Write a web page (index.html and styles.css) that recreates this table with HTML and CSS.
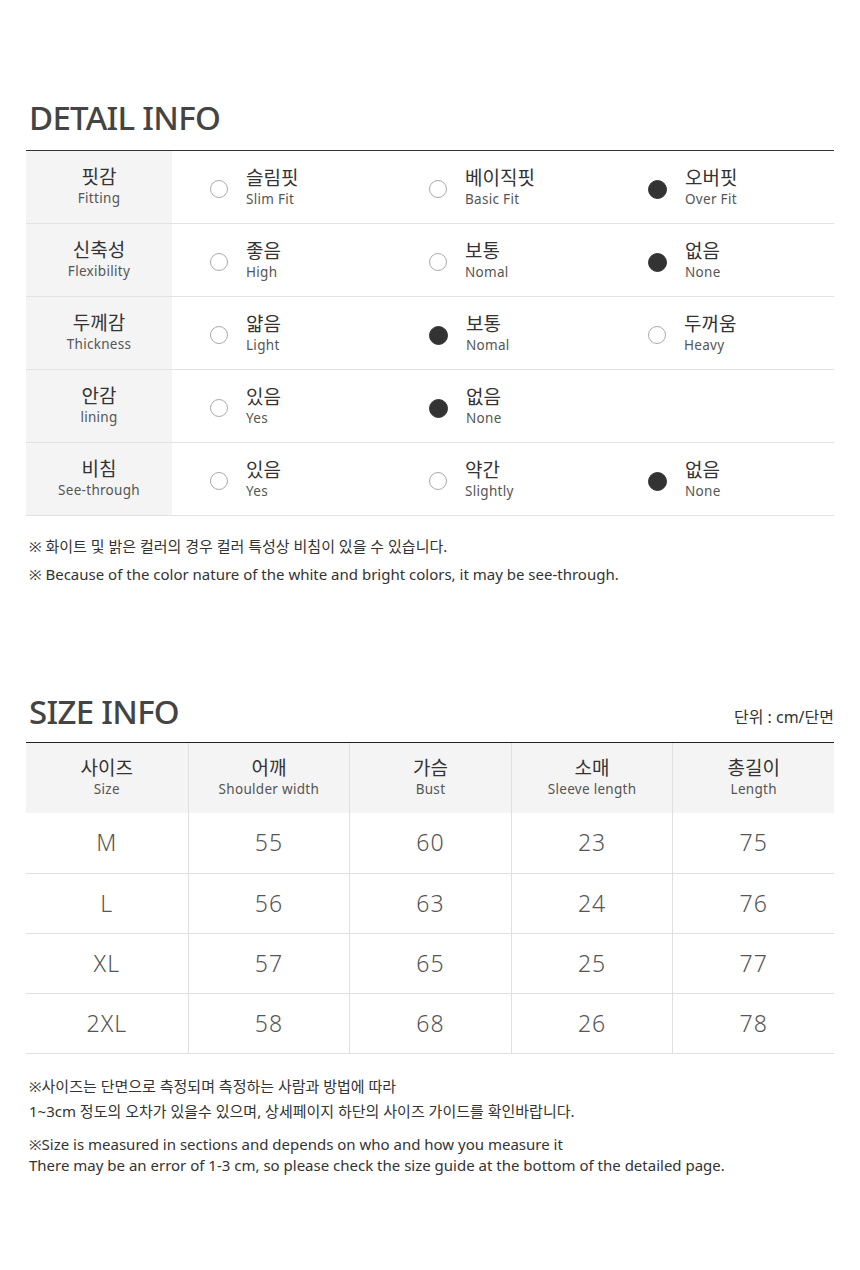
FILE: index.html
```html
<!DOCTYPE html>
<html lang="ko">
<head>
<meta charset="utf-8">
<link rel="stylesheet" href="styles.css">
</head>
<body>
<div class="page">
  <section class="detail">
    <h2 class="title">DETAIL INFO</h2>
    <div class="dtable">
      <div class="drow">
        <div class="dlabel"><span class="ko">핏감</span><span class="en">Fitting</span></div>
        <div class="opt"><span class="radio"></span><div class="txt"><span class="ko">슬림핏</span><span class="en">Slim Fit</span></div></div>
        <div class="opt"><span class="radio"></span><div class="txt"><span class="ko">베이직핏</span><span class="en">Basic Fit</span></div></div>
        <div class="opt"><span class="radio on"></span><div class="txt"><span class="ko">오버핏</span><span class="en">Over Fit</span></div></div>
      </div>
      <div class="drow">
        <div class="dlabel"><span class="ko">신축성</span><span class="en">Flexibility</span></div>
        <div class="opt"><span class="radio"></span><div class="txt"><span class="ko">좋음</span><span class="en">High</span></div></div>
        <div class="opt"><span class="radio"></span><div class="txt"><span class="ko">보통</span><span class="en">Nomal</span></div></div>
        <div class="opt"><span class="radio on"></span><div class="txt"><span class="ko">없음</span><span class="en">None</span></div></div>
      </div>
      <div class="drow">
        <div class="dlabel"><span class="ko">두께감</span><span class="en">Thickness</span></div>
        <div class="opt"><span class="radio"></span><div class="txt"><span class="ko">얇음</span><span class="en">Light</span></div></div>
        <div class="opt"><span class="radio on"></span><div class="txt"><span class="ko">보통</span><span class="en">Nomal</span></div></div>
        <div class="opt"><span class="radio"></span><div class="txt"><span class="ko">두꺼움</span><span class="en">Heavy</span></div></div>
      </div>
      <div class="drow">
        <div class="dlabel"><span class="ko">안감</span><span class="en">lining</span></div>
        <div class="opt"><span class="radio"></span><div class="txt"><span class="ko">있음</span><span class="en">Yes</span></div></div>
        <div class="opt"><span class="radio on"></span><div class="txt"><span class="ko">없음</span><span class="en">None</span></div></div>
        <div class="opt"></div>
      </div>
      <div class="drow">
        <div class="dlabel"><span class="ko">비침</span><span class="en">See-through</span></div>
        <div class="opt"><span class="radio"></span><div class="txt"><span class="ko">있음</span><span class="en">Yes</span></div></div>
        <div class="opt"><span class="radio"></span><div class="txt"><span class="ko">약간</span><span class="en">Slightly</span></div></div>
        <div class="opt"><span class="radio on"></span><div class="txt"><span class="ko">없음</span><span class="en">None</span></div></div>
      </div>
    </div>
    <div class="notes1">
      <p>※ 화이트 및 밝은 컬러의 경우 컬러 특성상 비침이 있을 수 있습니다.</p>
      <p>※ Because of the color nature of the white and bright colors, it may be see-through.</p>
    </div>
  </section>

  <section class="size">
    <div class="size-head">
      <h2 class="title">SIZE INFO</h2>
      <span class="unit">단위 : cm/단면</span>
    </div>
    <div class="stable">
      <div class="shead"><span class="ko">사이즈</span><span class="en">Size</span></div>
      <div class="shead"><span class="ko">어깨</span><span class="en">Shoulder width</span></div>
      <div class="shead"><span class="ko">가슴</span><span class="en">Bust</span></div>
      <div class="shead"><span class="ko">소매</span><span class="en">Sleeve length</span></div>
      <div class="shead"><span class="ko">총길이</span><span class="en">Length</span></div>

      <div class="scell">M</div><div class="scell">55</div><div class="scell">60</div><div class="scell">23</div><div class="scell">75</div>
      <div class="scell">L</div><div class="scell">56</div><div class="scell">63</div><div class="scell">24</div><div class="scell">76</div>
      <div class="scell">XL</div><div class="scell">57</div><div class="scell">65</div><div class="scell">25</div><div class="scell">77</div>
      <div class="scell">2XL</div><div class="scell">58</div><div class="scell">68</div><div class="scell">26</div><div class="scell">78</div>
    </div>
    <div class="notes2">
      <p class="ko-note">※사이즈는 단면으로 측정되며 측정하는 사람과 방법에 따라<br>1~3cm 정도의 오차가 있을수 있으며, 상세페이지 하단의 사이즈 가이드를 확인바랍니다.</p>
      <p class="en-note">※Size is measured in sections and depends on who and how you measure it<br>There may be an error of 1-3 cm, so please check the size guide at the bottom of the detailed page.</p>
    </div>
  </section>
</div>
</body>
</html>
```

FILE: styles.css
```css
* { box-sizing: border-box; }
html, body { margin: 0; padding: 0; background: #fff; }
body {
  font-family: "Noto Sans", "Noto Sans CJK KR", sans-serif;
  color: #333;
  width: 860px;
  height: 1270px;
  overflow: hidden;
}
.page { padding: 0 26px; }
p { margin: 0; }

.title {
  margin: 0;
  font-family: "Noto Sans", "Noto Sans CJK KR", sans-serif;
  font-weight: 500;
  font-size: 33px;
  line-height: 40px;
  letter-spacing: -0.7px;
  color: #444;
  padding-left: 3px;
}

.detail { padding-top: 98px; }
.detail .title { margin-bottom: 12px; }

.dtable { border-top: 1px solid #333; }
.drow {
  display: grid;
  grid-template-columns: 146px 219px 219px 1fr;
  height: 73px;
  border-bottom: 1px solid #e3e3e3;
}
.dlabel {
  background: #f4f4f4;
  display: flex;
  flex-direction: column;
  align-items: center;
  justify-content: center;
  padding-bottom: 2px;
}
.ko {
  font-family: "Noto Sans CJK KR", sans-serif;
  font-size: 19px;
  line-height: 24px;
  color: #333;
}
.en {
  font-family: "Noto Sans", "Noto Sans CJK KR", sans-serif;
  font-size: 13.5px;
  line-height: 20px;
  color: #555;
  letter-spacing: 0.3px;
}
.opt {
  display: flex;
  align-items: center;
  padding-left: 38px;
}
.radio {
  width: 18px;
  height: 18px;
  border-radius: 50%;
  border: 1px solid #aaa;
  flex: none;
  margin-right: 18px;
  margin-top: 4px;
}
.radio.on { background: #333; border-color: #333; width: 19px; height: 19px; }
.txt { display: flex; flex-direction: column; padding-bottom: 1px; }

.notes1 { padding-top: 16px; padding-left: 3px; }
.notes1 p { font-size: 15px; line-height: 28px; color: #333; }

.size { padding-top: 104px; }
.size-head {
  display: flex;
  justify-content: space-between;
  align-items: flex-end;
  margin-bottom: 10px;
}
.unit { font-size: 16px; line-height: 22px; color: #333; padding-bottom: 4px; }

.stable {
  display: grid;
  grid-template-columns: repeat(5, 1fr);
  border-top: 1px solid #222;
}
.shead {
  background: #f4f4f4;
  height: 70px;
  display: flex;
  flex-direction: column;
  align-items: center;
  justify-content: center;
  border-left: 1px solid #e0e0e0;
  padding-bottom: 3px;
}
.scell {
  height: 60px;
  display: flex;
  align-items: center;
  justify-content: center;
  border-left: 1px solid #e0e0e0;
  border-bottom: 1px solid #e0e0e0;
  font-family: "Noto Sans", sans-serif;
  font-size: 23px;
  font-weight: 300;
  color: #555;
  letter-spacing: 1px;
  padding-bottom: 2px;
}
.stable > .scell:nth-child(-n+10) { height: 61px; }
.stable > div:nth-child(5n+1) { border-left: none; }

.notes2 { padding-top: 20px; padding-left: 3px; }
.notes2 p { font-size: 15px; color: #333; }
.notes2 .ko-note { line-height: 25px; margin-bottom: 10px; }
.notes2 .en-note { line-height: 21px; }
```
